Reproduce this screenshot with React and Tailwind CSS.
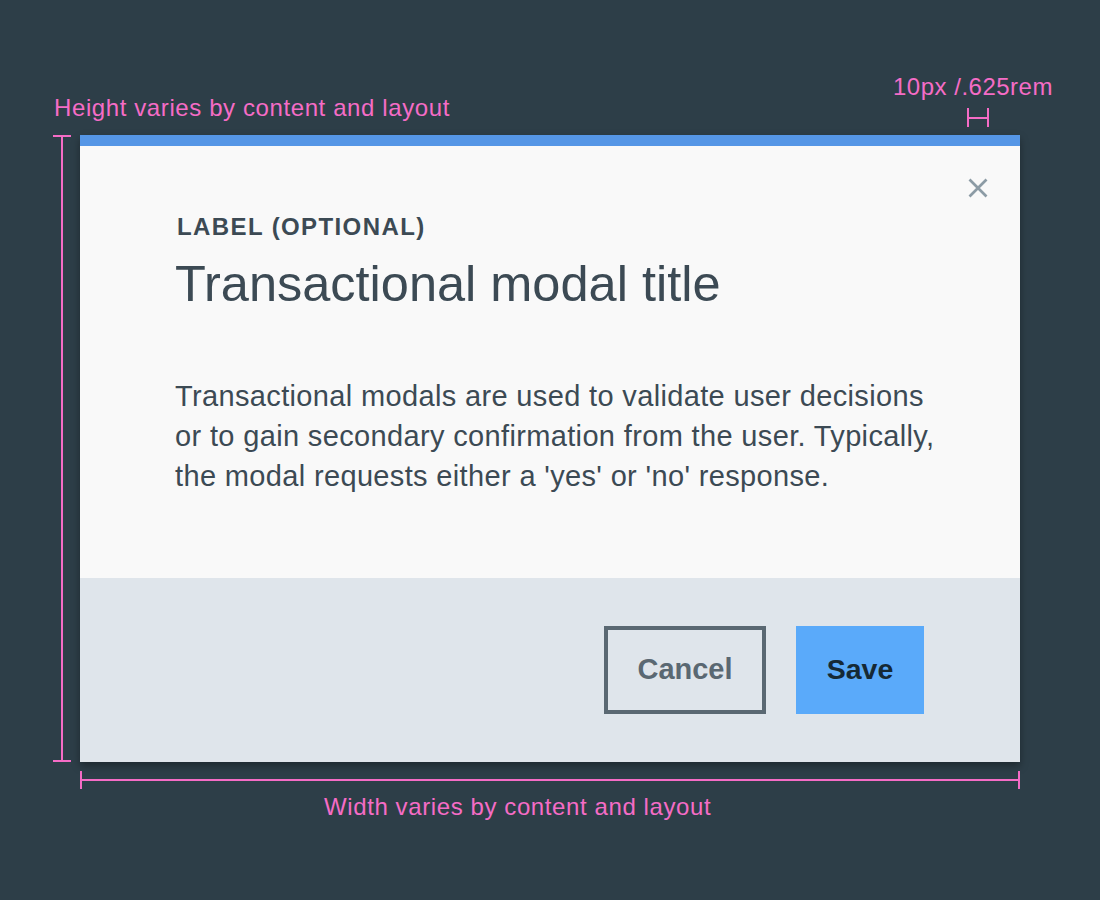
import React from "react";

const PINK = "bg-[#f56cc6]";

export default function App() {
  return (
    <div className="w-[1100px] h-[900px] bg-[#2d3e48] font-['Liberation_Sans',Arial,sans-serif] overflow-hidden">
      {/* top annotations */}
      <div className="flex h-[135px]">
        <div className="pl-[54px] pt-[94px]">
          <span className="block text-[24px] leading-[28px] tracking-[0.6px] text-[#f56cc6] whitespace-nowrap">
            Height varies by content and layout
          </span>
        </div>
        <div className="ml-auto w-[207px] pt-[73px]">
          <span className="block text-[24px] leading-[28px] tracking-[0.5px] text-[#f56cc6] whitespace-nowrap">
            10px /.625rem
          </span>
          <div className="ml-[74px] mt-[7px] flex items-center w-[22px] h-[19px]">
            <div className={`w-[2px] h-[19px] ${PINK}`} />
            <div className={`flex-1 h-[2px] ${PINK}`} />
            <div className={`w-[2px] h-[19px] ${PINK}`} />
          </div>
        </div>
      </div>

      {/* ruler + modal */}
      <div className="flex">
        <div className="ml-[53px] w-[18px] h-[627px] flex flex-col items-center">
          <div className={`w-[18px] h-[2px] ${PINK}`} />
          <div className={`w-[2px] flex-1 ${PINK}`} />
          <div className={`w-[18px] h-[2px] ${PINK}`} />
        </div>

        <div className="relative ml-[9px] w-[940px] h-[627px] flex flex-col bg-[#f9f9f9] shadow-[0_4px_8px_rgba(0,0,0,0.35)]">
          <div className="h-[11px] bg-[#5596e6]" />
          <button className="absolute top-[43px] right-[32px] w-[20px] h-[20px]" aria-label="Close">
            <svg width="20" height="20" viewBox="0 0 20 20">
              <path d="M1.5 1.5 L18.5 18.5 M18.5 1.5 L1.5 18.5" stroke="#8c9ba5" strokeWidth="2.7" fill="none" />
            </svg>
          </button>

          <div className="flex-1 pl-[95px] pt-[67px]">
            <div className="text-[24px] leading-[28px] font-bold tracking-[1.4px] text-[#3c4a54] pl-[2px]">
              LABEL (OPTIONAL)
            </div>
            <h1 className="mt-[13px] text-[50.5px] leading-[60px] font-light text-[#3c4a54] whitespace-nowrap">
              Transactional modal title
            </h1>
            <p className="mt-[62px] text-[29px] leading-[40px] tracking-[0.35px] text-[#3c4a54]">
              <span className="block whitespace-nowrap">Transactional modals are used to validate user decisions</span>
              <span className="block whitespace-nowrap">or to gain secondary confirmation from the user. Typically,</span>
              <span className="block whitespace-nowrap">the modal requests either a 'yes' or 'no' response.</span>
            </p>
          </div>

          <div className="h-[184px] bg-[#dfe5eb] flex items-center justify-end pr-[96px]">
            <button className="w-[162px] h-[88px] border-4 border-[#5a6872] flex items-center justify-center pb-[3px]">
              <span className="text-[29px] leading-[32px] font-bold text-[#5a6872]">Cancel</span>
            </button>
            <button className="ml-[30px] w-[128px] h-[88px] bg-[#5aaafa] flex items-center justify-center pb-[3px]">
              <span className="text-[28.5px] leading-[32px] font-bold text-[#152935]">Save</span>
            </button>
          </div>
        </div>
      </div>

      {/* width ruler */}
      <div className="ml-[80px] mt-[9px] w-[940px] h-[18px] flex items-center">
        <div className={`w-[2px] h-[18px] ${PINK}`} />
        <div className={`flex-1 h-[2px] ${PINK}`} />
        <div className={`w-[2px] h-[18px] ${PINK}`} />
      </div>
      <div className="pl-[324px] mt-[4px]">
        <span className="block text-[24px] leading-[28px] tracking-[0.6px] text-[#f56cc6] whitespace-nowrap">
          Width varies by content and layout
        </span>
      </div>
    </div>
  );
}
